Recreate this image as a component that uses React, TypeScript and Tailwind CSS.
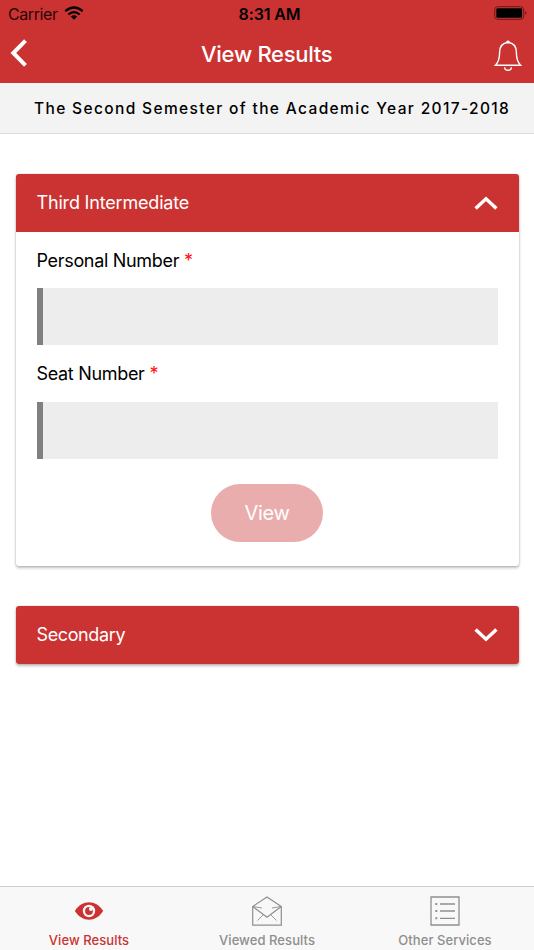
import type { ReactNode } from "react";

function Bell() {
  return (
    <svg width="28" height="32" viewBox="0 0 28 32" fill="none" stroke="white" strokeWidth="1.4" className="mt-[3px]">
      <path d="M14 2.5C7.8 3 5.6 7.200 5.600 12.500C5.600 19 4.600 22 1.500 25.300H26.500C23.400 22 22.400 19 22.400 12.500C22.400 7.200 20.200 3 14 2.500Z" />
      <path d="M12.300 2.500a1.700 1.700 0 0 1 3.400 0Z" fill="white" strokeWidth=".6" />
      <path d="M10.600 27.200a3.400 3 0 0 0 6.800 0" />
    </svg>
  );
}

function Chevron({ up }: { up?: boolean }) {
  return (
    <svg width="24" height="14" viewBox="0 0 24 14" fill="none" stroke="white" strokeWidth="3.5">
      <path d={up ? "M1.600 12.500L12 2.800L22.400 12.500" : "M1.600 1.500L12 11.200L22.400 1.500"} />
    </svg>
  );
}

function Wifi() {
  return (
    <svg width="20" height="14" viewBox="0 0 20 14" fill="none" stroke="black" strokeWidth="2.200" className="-mt-0.5">
      <path d="M1.300 5.200Q10 -2.200 18.700 5.200M4.300 8.500Q10 3.700 15.700 8.500" />
      <path d="M6.800 10.500Q10 7.900 13.200 10.500L10 13.700Z" fill="black" stroke="none" />
    </svg>
  );
}

function PanelHeader({ title, up }: { title: string; up?: boolean }) {
  return (
    <div className="flex h-[58px] items-center justify-between bg-[#cb3332] pr-[20.500px] pl-[21px] text-white">
      <span className={`text-[18px] leading-6 ${up ? "tracking-[-0.180px]" : "tracking-[-0.380px]"}`}>{title}</span>
      <Chevron up={up} />
    </div>
  );
}

function Field({ label }: { label: string }) {
  return (
    <label className="block">
      <span className="flex h-[56.500px] items-center gap-[5px] pt-px text-[18px] tracking-[-0.320px] text-black">
        <span>{label}</span>
        <span className="text-[#f11]">*</span>
      </span>
      <input className="block h-[57px] w-full border-l-[6px] border-[#808080] bg-[#ededed] px-3 outline-none" />
    </label>
  );
}

function Tab({ label, active, children }: { label: string; active?: boolean; children: ReactNode }) {
  return (
    <button
      className={`flex flex-1 flex-col items-center pt-2 text-[13px] font-medium tracking-[0.060px] ${active ? "text-[#cb3332]" : "text-[#8e8e8e]"}`}
    >
      <span className="flex h-[31px] items-center">{children}</span>
      <span className="mt-1.5 leading-4 whitespace-nowrap">{label}</span>
    </button>
  );
}

export default function App() {
  return (
    <div className="flex h-[950px] w-[534px] flex-col overflow-hidden bg-white font-['Inter',sans-serif]">
      <header className="h-[83px] bg-[#cb3332]">
        <div className="grid h-[27px] grid-cols-[1fr_64px_1fr] items-center pl-2 text-[16px] leading-5 text-black">
          <div className="flex items-center gap-1.5">
            <span className="tracking-[-0.400px] text-[#2a0505]">Carrier</span>
            <Wifi />
          </div>
          <span className="-ml-[3px] text-center font-semibold tracking-[-0.100px]">8:31 AM</span>
          <div className="flex justify-end pr-1.5">
            <svg width="34" height="14" viewBox="0 0 34 14" className="-mt-0.5">
              <rect x=".7" y=".7" width="29" height="12.600" rx="3" fill="none" stroke="#651a19" strokeWidth="1" />
              <rect x="2.300" y="2.300" width="25.800" height="9.400" rx="1.300" />
              <path d="M31.200 5Q33.800 7 31.200 9Z" fill="#651a19" />
            </svg>
          </div>
        </div>
        <div className="flex h-[54px] items-center justify-between pr-3 pl-[9.500px]">
          <svg width="28" height="28" viewBox="0 0 28 28" fill="none" stroke="white" strokeWidth="4" className="-mt-0.5">
            <path d="M15.500 1.600L3.300 14L15.500 26.400" />
          </svg>
          <h1 className="pl-0.5 text-[22px] leading-7 font-medium tracking-[-0.280px] text-white">View Results</h1>
          <Bell />
        </div>
      </header>
      <div className="flex h-[51px] items-center border-b border-[#dedede] bg-[#f3f3f3] pt-px pl-[34px] text-[15.500px] font-medium tracking-[1.360px] whitespace-nowrap text-black">
        The Second Semester of the Academic Year 2017-2018
      </div>
      <main className="flex flex-1 flex-col gap-10 px-[15.500px] pt-[39.500px]">
        <section className="h-[392px] overflow-hidden rounded-[3px] bg-white shadow-[0_2px_3px_rgba(0,0,0,0.25),0_0_2px_rgba(0,0,0,0.2)]">
          <PanelHeader title="Third Intermediate" up />
          <div className="flex flex-col px-[21px]">
            <Field label="Personal Number" />
            <Field label="Seat Number" />
            <button className="mt-[25.500px] flex h-[57.500px] w-28 items-center justify-center self-center rounded-full bg-[#eaadad] pt-px text-[20px] tracking-[-0.300px] text-white">
              View
            </button>
          </div>
        </section>
        <section className="overflow-hidden rounded-[3px] shadow-[0_2px_3px_rgba(0,0,0,0.25),0_0_2px_rgba(0,0,0,0.2)]">
          <PanelHeader title="Secondary" />
        </section>
      </main>
      <nav className="flex h-16 border-t border-[#cfcfcf] bg-[#f8f8f8]">
        <Tab label="View Results" active>
          <svg width="30" height="20" viewBox="0 0 30 20">
            <path d="M.8 10C5 4 9.500 1.300 15 1.300S25 4 29.200 10C25 16 20.500 18.700 15 18.700S5 16 .8 10Z" fill="currentColor" />
            <circle cx="15" cy="10" r="6.200" fill="#f8f8f8" />
            <circle cx="15" cy="10" r="3.900" fill="currentColor" />
            <circle cx="16.900" cy="7.900" r="2" fill="#f8f8f8" />
          </svg>
        </Tab>
        <Tab label="Viewed Results">
          <svg width="30" height="30" viewBox="0 0 30 30" fill="none" stroke="currentColor" strokeWidth="1.200">
            <path d="M.7 10.500V29.200H29.300V10.500L15 1Z" />
            <path d="M.7 10.500L15 21.200L29.300 10.500" />
            <path d="M1 10.500L10 12M29 10.500L20 12M11.500 18.500L5.500 24.500M18.500 18.500L24.500 24.500" strokeWidth=".9" />
          </svg>
        </Tab>
        <Tab label="Other Services">
          <svg width="30" height="30" viewBox="0 0 30 30" fill="none" stroke="currentColor" strokeWidth="1.300">
            <path d="M1 1H29V29H1ZM10 8H25M10 15H25M10 22.300H25" />
            <path d="M5.300 8H7.300M5.300 15H7.300M5.300 22.300H7.300" strokeWidth="2" />
          </svg>
        </Tab>
      </nav>
    </div>
  );
}
